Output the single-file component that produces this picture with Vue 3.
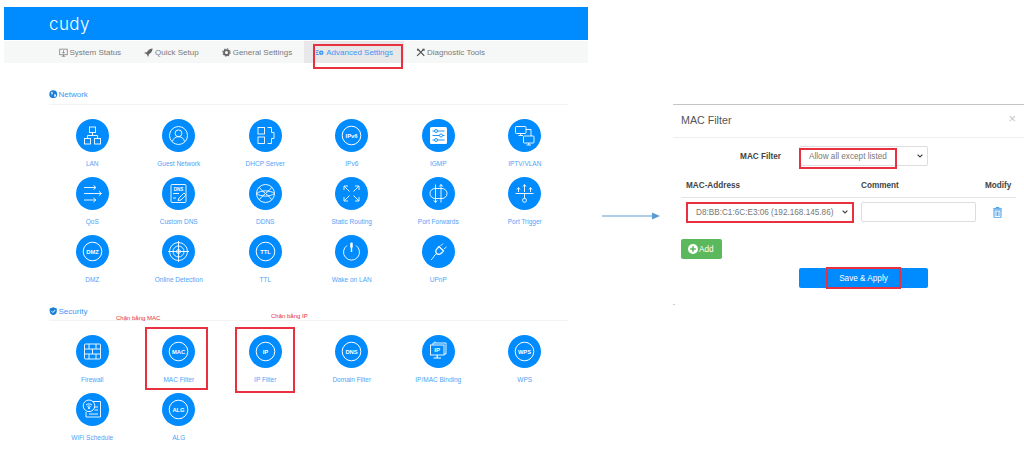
<template>
  <div class="page">
    <div class="router">
      <header class="brand"><span class="logo">cudy</span></header>
      <nav class="tabs">
        <a v-for="tab in tabs" :key="tab.label" :class="['tab', { active: tab.active }]">
          <svg class="tab-icon" viewBox="0 0 12 12" v-html="tab.svg"></svg>
          {{ tab.label }}
        </a>
      </nav>

      <section v-for="group in groups" :key="group.title" class="group">
        <h3 class="group-title">
          <svg class="group-icon" viewBox="0 0 12 12" v-html="group.svg"></svg>
          {{ group.title }}
        </h3>
        <div class="grid">
          <div v-for="item in group.items" :key="item.label" class="cell">
            <div class="disc">
              <svg width="33" height="33" viewBox="0 0 33 33">
                <template v-if="item.text">
                  <circle cx="16.5" cy="16.5" r="9.3" fill="none" stroke="#fff" stroke-width="1" />
                  <text x="16.5" y="18.6" text-anchor="middle" fill="#fff" class="disc-text">{{ item.text }}</text>
                </template>
                <g v-else fill="none" stroke="#fff" stroke-width=".9" v-html="item.svg"></g>
              </svg>
            </div>
            <span class="cell-label">{{ item.label }}</span>
          </div>
        </div>
      </section>
    </div>

    <div class="connector">
      <svg width="58" height="8" viewBox="0 0 58 8">
        <path d="M0 4H52" stroke="#5b9bd5" stroke-width="1" />
        <path d="M50 0.5L58 4L50 7.5Z" fill="#5b9bd5" />
      </svg>
    </div>

    <div class="modal">
      <div class="modal-head">
        <span class="modal-title">MAC Filter</span>
        <span class="modal-close">×</span>
      </div>
      <div class="modal-body">
        <div class="filter-row">
          <label class="filter-label">MAC Filter</label>
          <select class="control filter-select">
            <option>Allow all except listed</option>
          </select>
        </div>
        <div class="table-head">
          <span>MAC-Address</span>
          <span>Comment</span>
          <span>Modify</span>
        </div>
        <div class="table-row">
          <select class="control mac-select">
            <option>D8:BB:C1:6C:E3:06 (192.168.145.86)</option>
          </select>
          <input class="control" />
          <svg class="trash" width="9" height="11" viewBox="0 0 9 11">
            <path d="M3 1.5V.6h3v.9M0 1.8h9" fill="none" stroke="#3a9ae8" stroke-width="1" />
            <path d="M1 3h7v7a.8.8 0 0 1-.8.8H1.800A.8.8 0 0 1 1 10Z" fill="none" stroke="#3a9ae8" stroke-width="1" />
            <path d="M3 4.500v4.500M4.500 4.500v4.500M6 4.500v4.500" stroke="#3a9ae8" stroke-width=".8" />
          </svg>
        </div>
        <button class="add-btn">
          <svg width="10" height="10" viewBox="0 0 10 10">
            <circle cx="5" cy="5" r="5" fill="#fff" />
            <path d="M5 2.200v5.600M2.200 5h5.600" stroke="#5cb85c" stroke-width="1.600" />
          </svg>
          Add
        </button>
        <button class="save-btn">Save &amp; Apply</button>
      </div>
      <i class="modal-tick"></i>
    </div>

    <div
      v-for="box in marks"
      :key="box.x + '-' + box.y"
      class="mark"
      :style="{ left: box.x + 'px', top: box.y + 'px', width: box.w + 'px', height: box.h + 'px' }"
    ></div>
    <span class="note note-mac">Chặn bằng MAC</span>
    <span class="note note-ip">Chặn bằng IP</span>
  </div>
</template>

<script setup>
const tabs = [
  { label: 'System Status', svg: '<g fill="none" stroke="#777"><rect x="1" y="1.500" width="10" height="7.500"/><path d="M3.500 11h5M6 9v2M6 3v4M4.500 5.500L6 7l1.500-1.500"/></g>' },
  { label: 'Quick Setup', svg: '<path fill="#666" d="M11.500.5C8 .7 5.500 2.500 3.800 5.500L1 6l-.5 1 2.300.6 1.600 1.600.6 2.300 1-.5.5-2.800C9.500 6.500 11.300 4 11.500.5Z"/>' },
  { label: 'General Settings', svg: '<circle cx="6" cy="6" r="3.300" fill="none" stroke="#666" stroke-width="2.400"/><circle cx="6" cy="6" r="4.900" fill="none" stroke="#666" stroke-width="1.400" stroke-dasharray="1.900 1.950"/>' },
  { label: 'Advanced Settings', active: true, svg: '<g fill="#3d96f5"><rect x="1" y="3" width="4" height="1.300"/><rect x="1" y="5.500" width="3" height="1.300"/><rect x="1" y="8" width="4" height="1.300"/><circle cx="8.300" cy="6.300" r="3"/></g><circle cx="8.300" cy="6.300" r="1" fill="#e8e8e8"/>' },
  { label: 'Diagnostic Tools', svg: '<path d="M2 1l9 9.500M10.500 1.500L1.500 10.500" stroke="#555" stroke-width="1.600" fill="none"/><path d="M1 2.500L2.500 1l1.500 1.500L2.500 4Z" fill="#555"/><path d="M8.500 1h3v2.500l-1 .5-2-2Z" fill="#555"/>' }
]

const ringed = (label, text) => ({ label, text })

const networkItems = [
  { label: 'LAN', svg: '<rect x="13.500" y="8" width="6" height="5.500"/><rect x="8.500" y="19.500" width="6" height="5.500"/><rect x="18.500" y="19.500" width="6" height="5.500"/><path d="M16.500 13.500v3M11.500 19.500v-3h10v3"/>' },
  { label: 'Guest Network', svg: '<circle cx="16.500" cy="16.500" r="9"/><circle cx="16.500" cy="14.300" r="3.400"/><path d="M10.500 22.500c.8-3.300 3-4.800 6-4.800s5.200 1.500 6 4.800"/>' },
  { label: 'DHCP Server', svg: '<rect x="9" y="8.500" width="6.500" height="6.500"/><rect x="9" y="18" width="6.500" height="6.500"/><path d="M18.500 8.500H22.500V13.500H25V19.500H22.500V24.500H18.500"/>' },
  ringed('IPv6', 'IPv6'),
  { label: 'IGMP', svg: '<rect x="8" y="8" width="17" height="17" rx="1.500" fill="#fff" stroke="none"/><g stroke="#008cff"><path d="M10.500 12h12M10.500 16.500h12M10.500 21h12"/><circle cx="14" cy="12" r="1.500" fill="#fff"/><circle cx="19" cy="16.500" r="1.500" fill="#fff"/><circle cx="14" cy="21" r="1.500" fill="#fff"/></g>' },
  { label: 'IPTV/VLAN', svg: '<rect x="7.500" y="7.500" width="10.500" height="7" rx=".8"/><path d="M12.700 14.500v2M10.500 16.500h4.500"/><rect x="15.500" y="17" width="10.500" height="7" rx=".8"/><path d="M20.700 24v2M18.500 26h4.500M18 10.500h5v6.500"/>' },
  { label: 'QoS', svg: '<path d="M8 10.500h11M8 16.500h17M8 23h11"/><path d="M17.500 8.500l2.500 2-2.500 2M23 14.300l2.500 2.200-2.500 2.200M17.500 21l2.500 2-2.500 2"/>' },
  { label: 'Custom DNS', svg: '<rect x="9" y="7.500" width="15" height="18" rx="1"/><text x="16.500" y="13.500" text-anchor="middle" fill="#fff" stroke="none" style="font:bold 4.500px \'Liberation Sans\',sans-serif">DNS</text><path d="M11 16.500h6M11 21h3M16 23.500l1-2.500 5-5 2 2-5 5Z"/>' },
  { label: 'DDNS', svg: '<circle cx="16.500" cy="16.500" r="9"/><path d="M10.200 10.200C13 15 20 18 22.800 22.800M22.800 10.200C20 15 13 18 10.200 22.800M7.500 16.500C12 13 21 13 25.500 16.500M7.500 16.500C12 20 21 20 25.500 16.500"/>' },
  { label: 'Static Routing', svg: '<path d="M9.500 9.500l5 5M9 13V9h4M23.500 9.500l-5 5M20 9h4v4M9.500 23.500l5-5M9 20v4h4M23.500 23.500l-5-5M24 20v4h-4"/>' },
  { label: 'Port Forwards', svg: '<rect x="8" y="11.500" width="17" height="10" rx="5"/><path d="M13.500 7.500v18M19 7.500v18M11.800 23.500l1.700 2 1.700-2M17.300 9.500l1.700-2 1.700 2"/>' },
  { label: 'Port Trigger', svg: '<path d="M7.500 16.500h18M16.500 16.500v5"/><circle cx="16.500" cy="23.300" r="2"/><path d="M10.500 15v-4M16.500 15V8M22.500 15v-4M9 12.500l1.500-2 1.500 2M15 9.500l1.500-2 1.500 2M21 12.500l1.500-2 1.500 2"/>' },
  ringed('DMZ', 'DMZ'),
  { label: 'Online Detection', svg: '<circle cx="16.500" cy="16.500" r="9"/><circle cx="16.500" cy="16.500" r="5.500"/><circle cx="16.500" cy="16.500" r="2"/><path d="M16.500 6v21M6 16.500h21"/>' },
  ringed('TTL', 'TTL'),
  { label: 'Wake on LAN', svg: '<path d="M12 10.500a8 8 0 1 0 9 0"/><rect x="15.200" y="7.500" width="2.600" height="5.500" rx="1.300" fill="#fff" stroke="none"/><path d="M16.500 13v4" stroke-width="1.400"/>' },
  { label: 'UPnP', svg: '<path d="M17 11.500l4.500 4.500-2.500 2.500c-1.500 1.200-3 1.200-4.300 0-1.200-1.300-1.200-2.800 0-4.300Z" stroke-width="1.200"/><path d="M18.500 11l2.500-2.500M21.800 14.300l2.700-2.500M14.700 18.800C12 19.500 12 23 9 25"/>' }
]

const securityItems = [
  { label: 'Firewall', svg: '<rect x="8.500" y="9" width="16" height="15" rx="1"/><path d="M8.500 14h16M8.500 19h16M13 9v5M20 9v5M16.500 14v5M13 19v5M20 19v5"/>' },
  ringed('MAC Filter', 'MAC'),
  ringed('IP Filter', 'IP'),
  ringed('Domain Filter', 'DNS'),
  { label: 'IP/MAC Binding', svg: '<path d="M11 10V8h13v11h-2M13 8V6.500"/><rect x="8.500" y="10" width="13.500" height="10" fill="#008cff"/><text x="15.200" y="17.300" text-anchor="middle" fill="#fff" stroke="none" style="font:bold 6px \'Liberation Sans\',sans-serif">IP</text><path d="M15.200 20v2.500M11.500 23h7.500" stroke-width="1.200"/>' },
  ringed('WPS', 'WPS'),
  { label: 'WiFi Schedule', svg: '<path d="M17 8.500h7.500v15.500h-14.500v-5"/><circle cx="13" cy="12.800" r="5.800"/><path d="M10 12c1.800-1.500 4.200-1.500 6 0M11.300 13.500c1-.8 2.400-.8 3.400 0"/><circle cx="13" cy="15" r=".7" fill="#fff"/><path d="M18.500 14h3.500M18.500 17h3.500M13 21h9"/>' },
  ringed('ALG', 'ALG')
]

const groups = [
  {
    title: 'Network',
    svg: '<circle cx="6" cy="6" r="5.500" fill="#1b7fd8"/><path d="M3 2.500c2 .3 3 1.500 2 3-1 .8-1.500 2-.8 3.500M7.500 6c1.500-.3 2.500.5 2.500 2-.5 1-1.500 1.800-2.500 2Z" fill="#fff"/>',
    items: networkItems
  },
  {
    title: 'Security',
    svg: '<path d="M6 .5l5 1.500v4c0 3-2.200 4.800-5 5.500C3.200 10.800 1 9 1 6V2Z" fill="#1b7fd8"/><path d="M3.500 5.800L5.500 7.800 8.800 4.200" fill="none" stroke="#fff" stroke-width="1.400"/>',
    items: securityItems
  }
]

// red annotation rectangles, in page coordinates
const marks = [
  { x: 313, y: 44, w: 90, h: 25 },
  { x: 145, y: 327, w: 63, h: 63 },
  { x: 235, y: 327, w: 60, h: 66 },
  { x: 799, y: 148, w: 98, h: 21 },
  { x: 686, y: 202, w: 168, h: 21 },
  { x: 826, y: 267, w: 75, h: 22 }
]
</script>

<style scoped>
.page {
  position: relative;
  display: flex;
  align-items: flex-start;
  width: 1024px;
  height: 465px;
  overflow: hidden;
  padding: 7px 0 0 4px;
  box-sizing: border-box;
  background: #fff;
  font-family: "Liberation Sans", Arial, sans-serif;
}

.router {
  width: 584px;
  flex: none;
}

.brand {
  height: 33px;
  background: #008cff;
  padding-left: 45px;
  display: flex;
  align-items: center;
}

.logo {
  font-family: Inter, sans-serif;
  font-weight: 300;
  font-size: 17px;
  letter-spacing: 0.4px;
  line-height: 1;
  color: #fff;
  margin-top: 1px;
}

.tabs {
  display: flex;
  height: 22px;
  margin-top: 1px;
  padding-left: 43px;
  background: #f6f7f7;
}

.tab {
  display: flex;
  align-items: center;
  gap: 2px;
  padding: 0 11.5px;
  font-size: 8px;
  color: #7b7b7b;
}

.tab.active {
  background: #e8e8e8;
  color: #3d96f5;
}

.tab-icon {
  width: 9px;
  height: 9px;
}

.group {
  margin-left: 45px;
  width: 519px;
  padding-top: 24px;
}

.group + .group {
  padding-top: 20px;
}

.group-title {
  display: flex;
  align-items: center;
  gap: 1px;
  margin: 0 0 14px;
  height: 14px;
  padding-bottom: 3px;
  border-bottom: 1px solid #f3f3f3;
  font-size: 8px;
  font-weight: 400;
  color: #3d96f5;
}

.group + .group .group-title {
  padding-bottom: 2px;
}

.group-icon {
  width: 8.5px;
  height: 8.5px;
}

.grid {
  display: grid;
  grid-template-columns: repeat(6, 86.5px);
  row-gap: 9px;
}

.cell {
  display: flex;
  flex-direction: column;
  align-items: center;
  gap: 7px;
}

.disc {
  width: 33px;
  height: 33px;
  border-radius: 50%;
  background: #008cff;
}

.disc svg {
  display: block;
}

.disc-text {
  font-size: 5.8px;
  font-weight: 700;
  font-family: "Liberation Sans", Arial, sans-serif;
}

.cell-label {
  font-size: 6.5px;
  line-height: 9px;
  color: #4fa3f7;
  white-space: nowrap;
}

.connector {
  width: 85px;
  flex: none;
  box-sizing: border-box;
  padding: 205px 0 0 14px;
}

.connector svg {
  display: block;
}

.modal {
  position: relative;
  width: 351px;
  flex: none;
  margin-top: 97px;
  height: 201px;
  border-top: 1px solid #c4c4c4;
  box-sizing: border-box;
  color: #444;
}

.modal-head {
  display: flex;
  justify-content: space-between;
  align-items: center;
  height: 32px;
  padding: 0 8px;
  border-bottom: 1px solid #eee;
}

.modal-title {
  font-size: 10.7px;
  color: #555;
  margin-top: -2px;
}

.modal-close {
  font-size: 13px;
  color: #c6c6c6;
  margin-top: -5px;
}

.modal-body {
  padding: 9px 8px 0;
}

.filter-row {
  display: flex;
  align-items: center;
  gap: 18px;
  margin-top: -1px;
}

.filter-label {
  width: 100px;
  text-align: right;
  font-size: 8.2px;
  font-weight: 700;
}

.control {
  height: 20px;
  box-sizing: border-box;
  border: 1px solid #ddd;
  border-radius: 2px;
  background: #fff;
  font: 8.2px "Liberation Sans", Arial, sans-serif;
  color: #777;
  padding: 0 0 0 9px;
  min-width: 0;
}

select.control {
  appearance: none;
  padding-right: 18px;
  background: #fff url("data:image/svg+xml,%3Csvg xmlns='http://www.w3.org/2000/svg' width='6' height='4'%3E%3Cpath d='M.6.6 3 3l2.400-2.400' fill='none' stroke='%23444' stroke-width='1.200'/%3E%3C/svg%3E") no-repeat right 4px center;
}

.mac-select {
  padding-left: 9px;
}

.filter-select {
  width: 129px;
}

.table-head,
.table-row {
  display: grid;
  grid-template-columns: 167px 115px 1fr;
  column-gap: 8px;
}

.table-head {
  margin-top: 15px;
  padding: 0 0 6px 5px;
  grid-template-columns: 175px 124px 1fr;
  column-gap: 0;
  border-bottom: 1px solid #e4e4e4;
  font-size: 8.2px;
  font-weight: 700;
  line-height: 10px;
}

.table-row {
  align-items: center;
  padding: 4px 0 0 5px;
  width: 335px;
  box-sizing: border-box;
}

.trash {
  justify-self: center;
  margin-left: -5px;
  margin-top: 1px;
}

.add-btn {
  display: flex;
  align-items: center;
  gap: 1px;
  width: 41px;
  height: 20px;
  margin-top: 17px;
  padding: 0 0 0 7px;
  border: none;
  border-radius: 2px;
  background: #5cb85c;
  color: #fff;
  font: 8.2px "Liberation Sans", Arial, sans-serif;
}

.save-btn {
  display: block;
  width: 129px;
  height: 20px;
  margin: 9px 0 0 118px;
  padding: 0;
  border: none;
  border-radius: 2px;
  background: #008cff;
  color: #fff;
  font: 8.2px "Liberation Sans", Arial, sans-serif;
}

.modal-tick {
  position: absolute;
  left: 0;
  bottom: 0;
  width: 2px;
  height: 1px;
  background: #ccc;
}

.mark {
  position: absolute;
  box-sizing: border-box;
  border: 2px solid #e8303f;
}

.note {
  position: absolute;
  font-size: 6px;
  line-height: 8px;
  color: #e8303f;
  white-space: nowrap;
}

.note-mac {
  left: 116px;
  top: 314px;
}

.note-ip {
  left: 271px;
  top: 312px;
}
</style>
